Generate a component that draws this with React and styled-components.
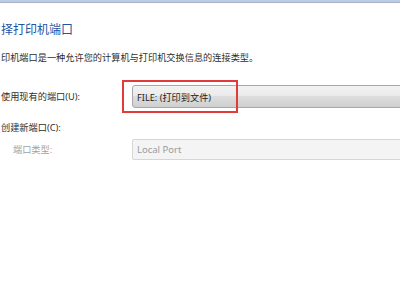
import React from 'react';
import styled, { createGlobalStyle } from 'styled-components';

const Global = createGlobalStyle`
  html, body {
    margin: 0;
    padding: 0;
    background: #fff;
    overflow: hidden;
  }
  body {
    font-family: "Noto Sans", "Noto Sans CJK SC", sans-serif;
  }
`;

const Page = styled.div`
  width: 400px;
  height: 298px;
  overflow: hidden;
  background: #fff;
`;

const TopStrip = styled.div`
  height: 2px;
  background: #b9cde9;
  border-bottom: 1px solid #a9b4c2;
`;

const Content = styled.div`
  padding: 19px 0 0 1px;
`;

const Title = styled.h1`
  margin: 0;
  font-size: 12px;
  line-height: 16px;
  font-weight: normal;
  color: #2453a4;
`;

const Description = styled.p`
  margin: 14px 0 0 0;
  font-size: 9.2px;
  line-height: 12px;
  color: #2e2e2e;
`;

const Form = styled.div`
  display: grid;
  grid-template-columns: 131px 300px;
  margin-top: 21px;
`;

const Label = styled.div`
  display: flex;
  align-items: ${p => (p.top ? 'flex-start' : 'center')};
  box-sizing: border-box;
  height: ${p => p.h || 23}px;
  padding-top: ${p => p.top || 0}px;
  padding-left: ${p => p.indent || 0}px;
  font-size: 9.2px;
  line-height: 12px;
  color: ${p => (p.disabled ? '#a3a3a3' : '#2e2e2e')};
`;

const Cell = styled.div`
  display: flex;
  align-items: center;
  height: ${p => p.h || 23}px;
  position: relative;
`;

const Highlight = styled.div`
  position: absolute;
  left: -10px;
  top: -5px;
  width: 112px;
  height: 29px;
  border: 2px solid #e23a3a;
  pointer-events: none;
`;

const Combo = styled.div`
  box-sizing: border-box;
  width: 300px;
  height: 23px;
  border: 1px solid #a8a8a8;
  border-radius: 3px;
  background: linear-gradient(#f2f2f2 0%, #ebebeb 45%, #dddddd 50%, #cfcfcf 100%);
  display: flex;
  align-items: center;
  padding-left: 4px;
  font-size: 9.2px;
  color: #222;
`;

const Field = styled.div`
  box-sizing: border-box;
  width: 300px;
  height: 21px;
  border: 1px solid #d6d6d6;
  border-radius: 2px;
  background: #f4f4f4;
  display: flex;
  align-items: center;
  padding-left: 4px;
  font-size: 9.5px;
  color: #9a9a9a;
`;

export default function App() {
  return (
    <Page>
      <Global />
      <TopStrip />
      <Content>
        <Title>择打印机端口</Title>
        <Description>印机端口是一种允许您的计算机与打印机交换信息的连接类型。</Description>
        <Form>
          <Label>使用现有的端口(U):</Label>
          <Cell>
            <Combo>FILE: (打印到文件)</Combo>
            <Highlight />
          </Cell>
          <Label h={31} top={14}>创建新端口(C):</Label>
          <Cell h={31} />
          <Label indent={12} disabled h={21}>端口类型:</Label>
          <Cell h={21}>
            <Field>Local Port</Field>
          </Cell>
        </Form>
      </Content>
    </Page>
  );
}
